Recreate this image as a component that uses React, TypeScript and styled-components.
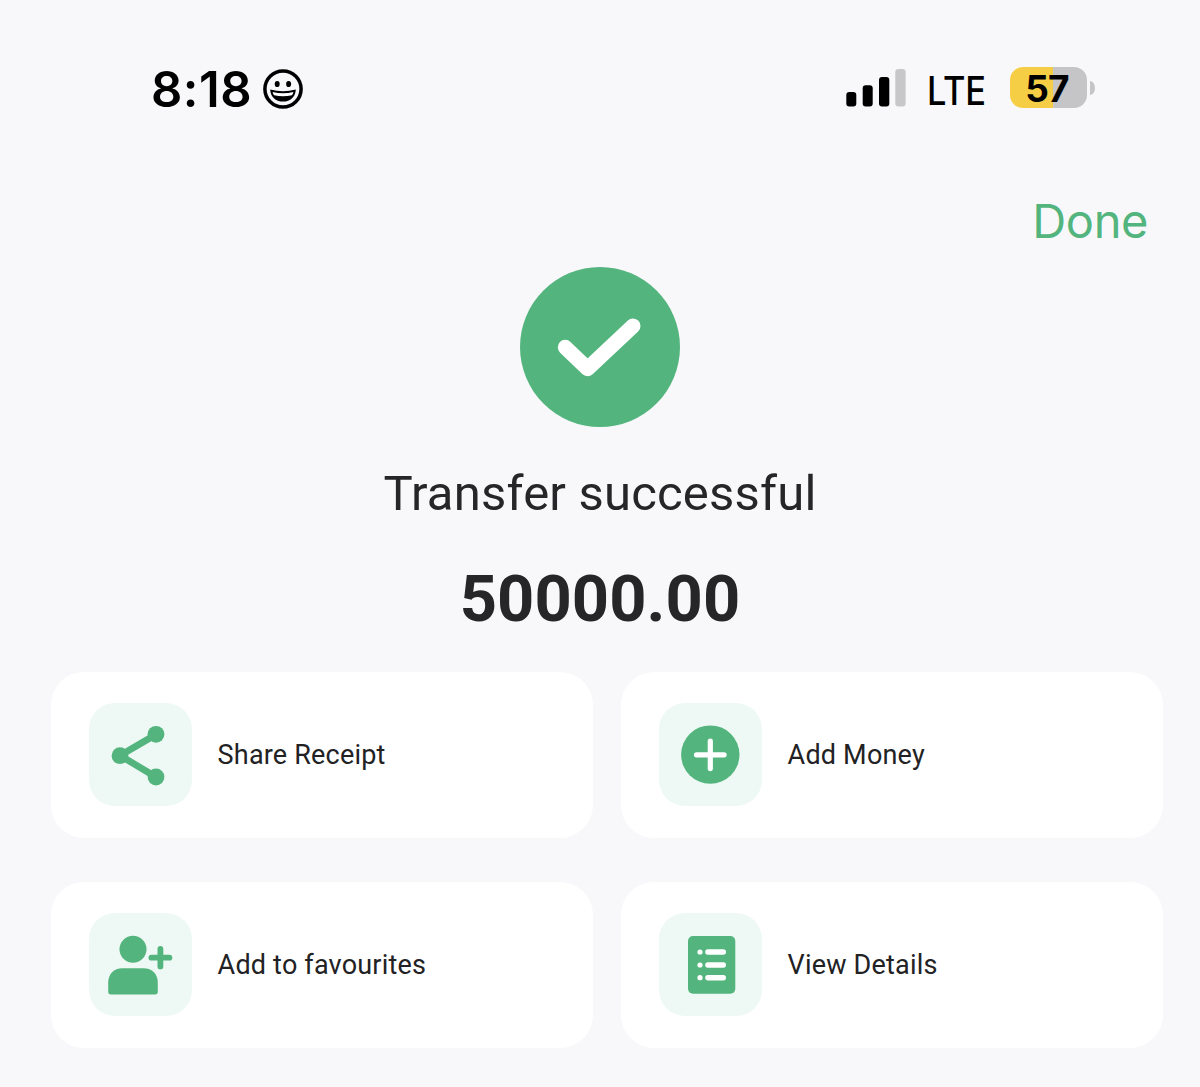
import React from "react";
import styled, { createGlobalStyle } from "styled-components";

const GREEN = "#53b57d";

const GlobalStyle = createGlobalStyle`
  * { box-sizing: border-box; }
  body { margin: 0; background: #f8f8fb; }
`;

const Screen = styled.main`
  width: 1200px;
  height: 1087px;
  overflow: hidden;
  display: flex;
  flex-direction: column;
  background: #f8f8fb;
  padding-top: 60px;
  font-family: Roboto, sans-serif;
  color: #262628;
`;

const StatusBar = styled.header`
  display: flex;
  justify-content: space-between;
  align-items: center;
  height: 60px;
  padding: 0 105px 0 151px;
  font-family: Inter, sans-serif;
  color: #000;
`;

const StatusGroup = styled.div`
  display: flex;
  align-items: center;
`;

const Clock = styled.span`
  width: 111.5px;
  font-size: 49px;
  line-height: 58px;
  font-weight: 600;
  letter-spacing: 0.5px;
  white-space: nowrap;
`;

const Network = styled.span`
  width: 104px;
  padding-left: 21px;
  font-size: 40px;
  line-height: 60px;
  font-weight: 500;
  white-space: nowrap;
`;

const NetworkLabel = styled.span`
  display: inline-block;
  margin-top: 1px;
  letter-spacing: -0.2px;
  transform: scaleX(0.86);
  transform-origin: left;
`;

const BatteryBody = styled.div<{ $level: number }>`
  width: 77px;
  height: 41px;
  margin-top: -5px;
  border-radius: 13px;
  background: linear-gradient(to right, #f6ce45 ${(p) => p.$level}%, #c5c5c7 ${(p) => p.$level}%);
  font-size: 37px;
  line-height: 43px;
  font-weight: 700;
  letter-spacing: -0.8px;
  padding-right: 3px;
  text-align: center;
`;

const BatteryTip = styled.div`
  width: 5px;
  height: 14px;
  margin: -5px 0 0 3px;
  border-radius: 0 5px 5px 0 / 0 7px 7px 0;
  background: #c5c5c7;
`;

const NavRow = styled.nav`
  display: flex;
  justify-content: flex-end;
  margin-top: 71px;
  padding-right: 52px;
`;

const DoneButton = styled.button`
  border: 0;
  padding: 0;
  background: none;
  font: 400 47px/60px Inter, sans-serif;
  letter-spacing: -0.4px;
  color: ${GREEN};
`;

const Summary = styled.section`
  display: flex;
  flex-direction: column;
  align-items: center;
  padding-top: 16px;
`;

const Title = styled.h1`
  margin: 37px 0 0;
  font-size: 49px;
  line-height: 60px;
  font-weight: 400;
  letter-spacing: 0.2px;
`;

const Amount = styled.p`
  margin: 35px 0 0;
  font-size: 65px;
  line-height: 80px;
  font-weight: 700;
  letter-spacing: 0.1px;
`;

const Actions = styled.section`
  display: grid;
  grid-template-columns: 542px 542px;
  grid-auto-rows: 166px;
  gap: 44px 28px;
  padding: 32.5px 0 0 51.3px;
`;

const Card = styled.button`
  display: flex;
  align-items: center;
  gap: 25.3px;
  border: 0;
  border-radius: 33px;
  padding: 0 0 0 38px;
  background: #fff;
  font: 400 27px/36px Roboto, sans-serif;
  letter-spacing: 0.19px;
  color: #222224;
`;

const Label = styled.span`
  padding-top: 1px;
`;

const Tile = styled.span`
  display: flex;
  width: 103px;
  height: 103px;
  border-radius: 26px;
  background: #eef9f5;
`;

const SmileySvg = styled.svg`
  margin-top: -2px;
`;

const SignalSvg = styled.svg`
  margin-top: -4px;
`;

const Smiley = () => (
  <SmileySvg width="40" height="40" viewBox="0 0 40 40">
    <circle cx="20" cy="20" r="18.1" fill="none" stroke="#000" strokeWidth="3.5" />
    <ellipse cx="14.2" cy="15" rx="2.5" ry="3.1" />
    <ellipse cx="25.6" cy="15" rx="2.5" ry="3.1" />
    <path d="M7.2 20.4Q20 24 32.8 20.4C32.6 27.5 27.4 32.6 20 32.6S7.4 27.5 7.2 20.4Z" />
    <path d="M9.6 22.9Q20 25.6 30.4 22.9Q29.9 25 28.9 26.2Q20 28.2 11.1 26.2Q10.1 25 9.6 22.9Z" fill="#fff" />
  </SmileySvg>
);

const Signal = () => (
  <SignalSvg width="60" height="38" viewBox="0 0 60 38">
    <rect x="0.3" y="23" width="10" height="14.5" rx="3" />
    <rect x="16.7" y="16.3" width="10" height="21.2" rx="3" />
    <rect x="33" y="8" width="10.3" height="29.5" rx="3" />
    <rect x="49.3" y="0" width="10.3" height="37.5" rx="3" fill="#c7c7c9" />
  </SignalSvg>
);

const SuccessMark = () => (
  <svg width="160" height="160" viewBox="0 0 160 160">
    <circle cx="80" cy="80" r="80" fill={GREEN} />
    <path d="M45.3 80.3L67.5 101.7L113 59" fill="none" stroke="#fff" strokeWidth="15" strokeLinecap="round" strokeLinejoin="round" />
  </svg>
);

const IconSvg = styled.svg.attrs({ width: 103, height: 103, viewBox: "0 0 103 103" })`
  fill: ${GREEN};
`;

const ShareIcon = () => (
  <IconSvg>
    <path d="M67 31.5L31 52.5L67 74" fill="none" stroke={GREEN} strokeWidth="6.8" />
    <circle cx="67" cy="31.3" r="8.4" />
    <circle cx="31" cy="52.7" r="8.4" />
    <circle cx="67" cy="74" r="8.4" />
  </IconSvg>
);

const AddIcon = () => (
  <IconSvg>
    <circle cx="51.3" cy="51.6" r="29.2" />
    <path d="M51.3 38V65.6M37.5 51.8H65.1" stroke="#fff" strokeWidth="5.2" strokeLinecap="round" />
  </IconSvg>
);

const PersonAddIcon = () => (
  <IconSvg>
    <circle cx="44" cy="36.3" r="13.5" />
    <path d="M19.2 69.5C19.2 60.8 25 55.2 33.2 55.2H54.8C63 55.2 68.8 60.8 68.8 69.5V78.8Q68.8 81.4 66.2 81.4H21.8Q19.2 81.4 19.2 78.8Z" />
    <path d="M71.4 36V53.4M62.4 44.7H80.4" stroke={GREEN} strokeWidth="5.8" strokeLinecap="round" />
  </IconSvg>
);

const DetailsIcon = () => (
  <IconSvg>
    <rect x="29" y="23" width="47.3" height="57.8" rx="5" />
    {[39, 52, 64.7].map((y) => (
      <g key={y} fill="#fff">
        <circle cx="41" cy={y} r="2.6" />
        <rect x="46.2" y={y - 2.7} width="20.8" height="5.4" rx="2.7" />
      </g>
    ))}
  </IconSvg>
);

const actions = [
  { label: "Share Receipt", Icon: ShareIcon },
  { label: "Add Money", Icon: AddIcon },
  { label: "Add to favourites", Icon: PersonAddIcon },
  { label: "View Details", Icon: DetailsIcon },
];

export default function App() {
  return (
    <Screen>
      <GlobalStyle />
      <StatusBar>
        <StatusGroup>
          <Clock>8:18</Clock>
          <Smiley />
        </StatusGroup>
        <StatusGroup>
          <Signal />
          <Network>
            <NetworkLabel>LTE</NetworkLabel>
          </Network>
          <BatteryBody $level={56}>57</BatteryBody>
          <BatteryTip />
        </StatusGroup>
      </StatusBar>
      <NavRow>
        <DoneButton>Done</DoneButton>
      </NavRow>
      <Summary>
        <SuccessMark />
        <Title>Transfer successful</Title>
        <Amount>50000.00</Amount>
      </Summary>
      <Actions>
        {actions.map(({ label, Icon }) => (
          <Card key={label}>
            <Tile>
              <Icon />
            </Tile>
            <Label>{label}</Label>
          </Card>
        ))}
      </Actions>
    </Screen>
  );
}
